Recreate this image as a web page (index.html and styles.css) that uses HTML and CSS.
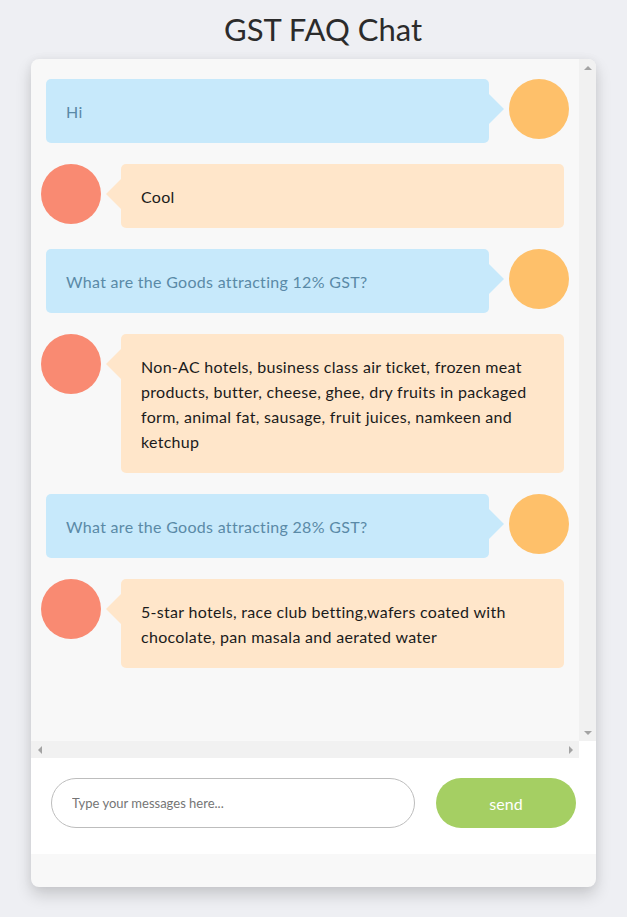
FILE: index.html
```html
<!DOCTYPE html>
<html lang="en">
<head>
<meta charset="utf-8">
<title>GST FAQ Chat</title>
<link rel="stylesheet" href="styles.css">
</head>
<body>
<h1 class="title">GST FAQ Chat</h1>
<div class="card">
  <div class="chat">
    <div class="messages">
      <div class="row row-user">
        <div class="bubble bubble-user">Hi</div>
        <div class="avatar avatar-user"></div>
      </div>
      <div class="row row-bot">
        <div class="avatar avatar-bot"></div>
        <div class="bubble bubble-bot">Cool</div>
      </div>
      <div class="row row-user">
        <div class="bubble bubble-user">What are the Goods attracting 12% GST?</div>
        <div class="avatar avatar-user"></div>
      </div>
      <div class="row row-bot">
        <div class="avatar avatar-bot"></div>
        <div class="bubble bubble-bot">Non-AC hotels, business class air ticket, frozen meat products, butter, cheese, ghee, dry fruits in packaged form, animal fat, sausage, fruit juices, namkeen and ketchup</div>
      </div>
      <div class="row row-user">
        <div class="bubble bubble-user">What are the Goods attracting 28% GST?</div>
        <div class="avatar avatar-user"></div>
      </div>
      <div class="row row-bot">
        <div class="avatar avatar-bot"></div>
        <div class="bubble bubble-bot">5-star hotels, race club betting,wafers coated with chocolate, pan masala and aerated water</div>
      </div>
    </div>
  </div>
  <div class="vscroll" aria-hidden="true">
    <span class="sbtn"><span class="arrow arrow-up"></span></span>
    <span class="sbtn"><span class="arrow arrow-down"></span></span>
  </div>
  <div class="hscroll" aria-hidden="true">
    <span class="sbtn"><span class="arrow arrow-left"></span></span>
    <span class="sbtn"><span class="arrow arrow-right"></span></span>
  </div>
  <div class="scroll-corner"></div>
  <form class="composer">
    <input class="composer-input" type="text" placeholder="Type your messages here...">
    <button class="composer-send" type="button">send</button>
  </form>
  <div class="card-foot"></div>
</div>
</body>
</html>
```

FILE: styles.css
```css
html, body {
  margin: 0;
  padding: 0;
}
body {
  background: #eeeff3;
  font-family: "Lato", "Liberation Sans", sans-serif;
  height: 917px;
}
.title {
  margin: 0;
  height: 59px;
  padding-left: 19px;
  line-height: 59px;
  text-align: center;
  font-size: 31px;
  font-weight: 400;
  color: #2b2b2b;
}
.card {
  width: 565px;
  height: 828px;
  margin: 0 auto;
  background: #f8f8f8;
  border-radius: 8px;
  overflow: hidden;
  display: grid;
  grid-template-columns: 548px 17px;
  grid-template-rows: 682px 17px 96px 33px;
  box-shadow: 0 8px 16px rgba(0, 0, 0, 0.16), 0 0 10px rgba(0, 0, 0, 0.05);
}
.chat {
  grid-column: 1;
  grid-row: 1;
  overflow: hidden;
}
.vscroll {
  grid-column: 2;
  grid-row: 1;
  background: #f1f1f1;
  display: flex;
  flex-direction: column;
  justify-content: space-between;
}
.hscroll {
  grid-column: 1;
  grid-row: 2;
  background: #f1f1f1;
  display: flex;
  justify-content: space-between;
}
.scroll-corner {
  grid-column: 2;
  grid-row: 2;
  background: #ffffff;
}
.sbtn {
  width: 17px;
  height: 17px;
  display: flex;
  align-items: center;
  justify-content: center;
}
.arrow {
  width: 0;
  height: 0;
}
.arrow-up {
  border-left: 4px solid transparent;
  border-right: 4px solid transparent;
  border-bottom: 4px solid #a3a3a3;
}
.arrow-down {
  border-left: 4px solid transparent;
  border-right: 4px solid transparent;
  border-top: 4px solid #a3a3a3;
}
.arrow-left {
  border-top: 4px solid transparent;
  border-bottom: 4px solid transparent;
  border-right: 4px solid #a3a3a3;
}
.arrow-right {
  border-top: 4px solid transparent;
  border-bottom: 4px solid transparent;
  border-left: 4px solid #a3a3a3;
}
.messages {
  padding: 20px 0 0;
}
.row {
  display: flex;
  align-items: flex-start;
  gap: 20px;
  margin-bottom: 21px;
}
.row-user {
  padding: 0 10px 0 15px;
}
.row-bot {
  padding: 0 15px 0 10px;
}
.avatar {
  flex: 0 0 60px;
  width: 60px;
  height: 60px;
  border-radius: 50%;
}
.avatar-user {
  background: #fec06a;
}
.avatar-bot {
  background: #f98a72;
}
.bubble {
  position: relative;
  flex: 1 1 auto;
  padding: 20px 20px 19px;
  border-radius: 5px;
  font-size: 16px;
  letter-spacing: 0.3px;
  line-height: 25px;
}
.bubble::after {
  content: "";
  position: absolute;
  top: 15px;
  border-top: 15px solid transparent;
  border-bottom: 15px solid transparent;
}
.bubble-user {
  background: #c7e9fb;
  color: #5a8aa7;
}
.bubble-user::after {
  right: -15px;
  border-left: 15px solid #c7e9fb;
}
.bubble-bot {
  background: #ffe6ca;
  color: #1b1b1b;
}
.bubble-bot::after {
  left: -15px;
  border-right: 15px solid #ffe6ca;
}
.composer {
  grid-column: 1 / span 2;
  grid-row: 3;
  display: flex;
  gap: 21px;
  margin: 0;
  padding: 20px 20px 26px;
  background: #ffffff;
}
.composer-input {
  flex: 1 1 auto;
  min-width: 0;
  height: 50px;
  box-sizing: border-box;
  padding: 0 20px;
  border: 1px solid #bdbdbd;
  border-radius: 25px;
  font-family: "Lato", "Liberation Sans", sans-serif;
  font-size: 13px;
  color: #333;
  background: #fff;
  outline: none;
}
.composer-input::placeholder {
  color: #757575;
}
.composer-send {
  flex: 0 0 140px;
  height: 50px;
  border: none;
  border-radius: 25px;
  background: #a5cf63;
  color: #ffffff;
  font-family: "Lato", "Liberation Sans", sans-serif;
  font-size: 16px;
  padding: 0;
}
.card-foot {
  grid-column: 1 / span 2;
  grid-row: 4;
}
```
